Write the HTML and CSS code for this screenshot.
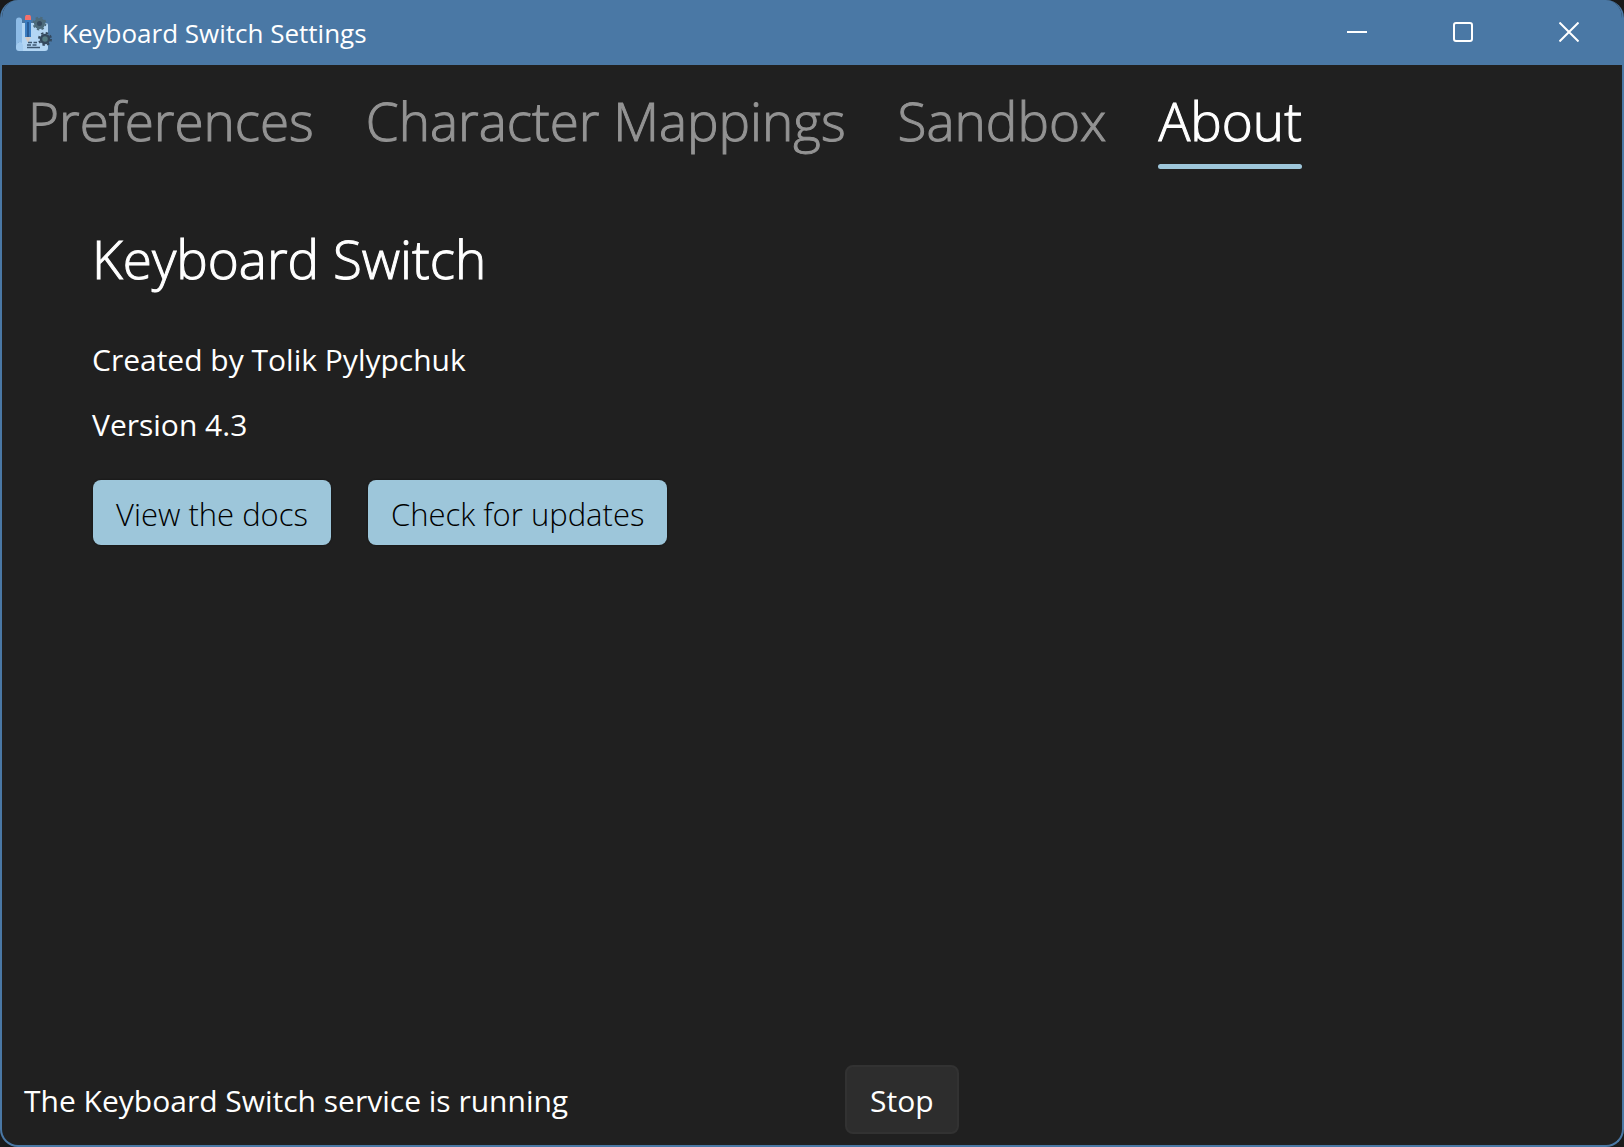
FILE: index.html
```html
<!DOCTYPE html>
<html lang="en">
<head>
<meta charset="utf-8">
<meta name="viewport" content="width=device-width, initial-scale=1">
<title>Keyboard Switch Settings</title>
<link rel="stylesheet" href="styles.css">
</head>
<body>
<div class="window">
  <header class="titlebar">
    <svg class="app-icon" viewBox="0 0 36 36" aria-hidden="true">
      <path fill="#b3d6f4" d="M6 8H30a2 2 0 0 1 2 2V33a3 3 0 0 1-3 3H3V28Z"/>
      <path fill="#8dbbe6" d="M0 5.500a3 3 0 0 1 6 0V28a4 4 0 0 0-6 3Z"/>
      <path fill="#a2cbf0" d="M0 31a3.500 3.500 0 0 1 7 0v5H3a3 3 0 0 1-3-3Z"/>
      <circle cx="23.500" cy="8.500" r="4" fill="#34495e" stroke="#4d6b7b" stroke-width="3"/>
      <circle cx="23.500" cy="8.500" r="6" fill="none" stroke="#4d6b7b" stroke-width="1.800" stroke-dasharray="2.400 2.312"/>
      <circle cx="29" cy="24" r="4" fill="#547b83" stroke="#34495e" stroke-width="2.500"/>
      <circle cx="29" cy="24" r="6" fill="none" stroke="#34495e" stroke-width="2" stroke-dasharray="2.400 2.312"/>
      <path fill="#3a7cc0" d="M9 5h6v17H9Z"/>
      <path fill="#275b96" d="M11 7h2v15h-2Z"/>
      <path fill="#d4cbc5" d="M9 22h6l-3 6Z"/>
      <path fill="#f4716c" d="M9 5V2.500a3 3 0 0 1 6 0V5Z"/>
      <path stroke="#3d5770" stroke-width="1.300" stroke-dasharray="4 1.500" d="M12 27.500h9M11 30h10"/>
      <path stroke="#3d5770" stroke-width="1.300" d="M11 32.500h13"/>
    </svg>
    <h1 class="window-title">Keyboard Switch Settings</h1>
    <div class="window-controls">
      <button class="control" type="button" aria-label="Minimize"><svg viewBox="0 0 20 20"><path d="M0 10h20"/></svg></button>
      <button class="control" type="button" aria-label="Maximize"><svg viewBox="0 0 20 20"><rect x="1" y="1" width="18" height="18" rx="2"/></svg></button>
      <button class="control" type="button" aria-label="Close"><svg viewBox="0 0 20 20"><path d="m.5.5 19 19m0-19-19 19"/></svg></button>
    </div>
  </header>
  <nav class="tabs">
    <a class="tab" href="#preferences">Preferences</a>
    <a class="tab" href="#mappings">Character Mappings</a>
    <a class="tab" href="#sandbox">Sandbox</a>
    <a class="tab tab-active" href="#about" aria-current="page">About</a>
  </nav>
  <main class="about" id="about">
    <h2 class="about-title">Keyboard Switch</h2>
    <p class="about-line">Created by Tolik Pylypchuk</p>
    <p class="about-line">Version 4.3</p>
    <div class="actions">
      <button class="button button-accent" type="button">View the docs</button>
      <button class="button button-accent" type="button">Check for updates</button>
    </div>
  </main>
  <footer class="service">
    <p class="service-status">The Keyboard Switch service is running</p>
    <button class="button button-stop" type="button">Stop</button>
  </footer>
</div>
</body>
</html>
```
FILE: styles.css
```css
* {
  box-sizing: border-box;
}

body {
  margin: 0;
  background: #1a1a1a;
  color: #fff;
  font-family: "Segoe UI", "Open Sans", "Noto Sans", sans-serif;
  font-size: 30px;
  line-height: 40px;
}

h1, h2, p {
  margin: 0;
  font-weight: 400;
}

.window {
  display: flex;
  flex-direction: column;
  min-height: 100vh;
  border: 2px solid #4a78a5;
  border-top: 0;
  border-radius: 18px;
  background: #202020;
  overflow: hidden;
}

.titlebar {
  display: flex;
  align-items: center;
  height: 65px;
  padding-left: 14px;
  background: #4a78a5;
}

.app-icon {
  width: 36px;
  height: 36px;
}

.window-title {
  margin-left: 10px;
  font-size: 26px;
}

.window-controls {
  display: flex;
  align-self: stretch;
  margin-left: auto;
}

.control {
  display: grid;
  place-items: center;
  width: 106px;
  padding: 0 0 2px;
  border: 0;
  background: none;
}

.control svg {
  width: 20px;
  height: 20px;
  fill: none;
  stroke: #fff;
  stroke-width: 2;
}

.tabs {
  display: flex;
  gap: 52px;
  padding: 0 26px;
}

.tab {
  padding: 20px 0 12px;
  color: #939393;
  font-size: 53px;
  font-weight: 300;
  line-height: 72px;
  text-decoration: none;
  -webkit-text-stroke: 1px currentColor;
}

.tab-active {
  position: relative;
  color: #fff;
}

.tab-active::after {
  content: "";
  position: absolute;
  inset: auto 0 0;
  height: 5px;
  border-radius: 3px;
  background: #9dc6da;
}

.about {
  flex: 1;
  padding: 54px 90px 0;
}

.about-title {
  margin-bottom: 45px;
  font-size: 53px;
  font-weight: 300;
  line-height: 72px;
  -webkit-text-stroke: 1px currentColor;
}

.about-line {
  margin-bottom: 25px;
}

.actions {
  display: flex;
  gap: 37px;
  margin: 35px 1px 0;
}

.button {
  border: 0;
  border-radius: 8px;
  font: inherit;
}

.button-accent {
  height: 65px;
  padding: 2px 23px 0;
  background: #9dc6da;
  box-shadow: 0 0 1px 1px #1b1b1b;
  color: #000;
  font-size: 31px;
  font-weight: 300;
}

.service {
  display: grid;
  grid-template-columns: 1fr 1fr;
  align-items: center;
  gap: 66px;
  padding: 0 22px 11px;
}

.service-status {
  padding-top: 2px;
}

.button-stop {
  justify-self: start;
  height: 69px;
  padding: 2px 23px 0;
  border: 2px solid #323232;
  background: #2d2d2d;
  color: #fff;
}
```
